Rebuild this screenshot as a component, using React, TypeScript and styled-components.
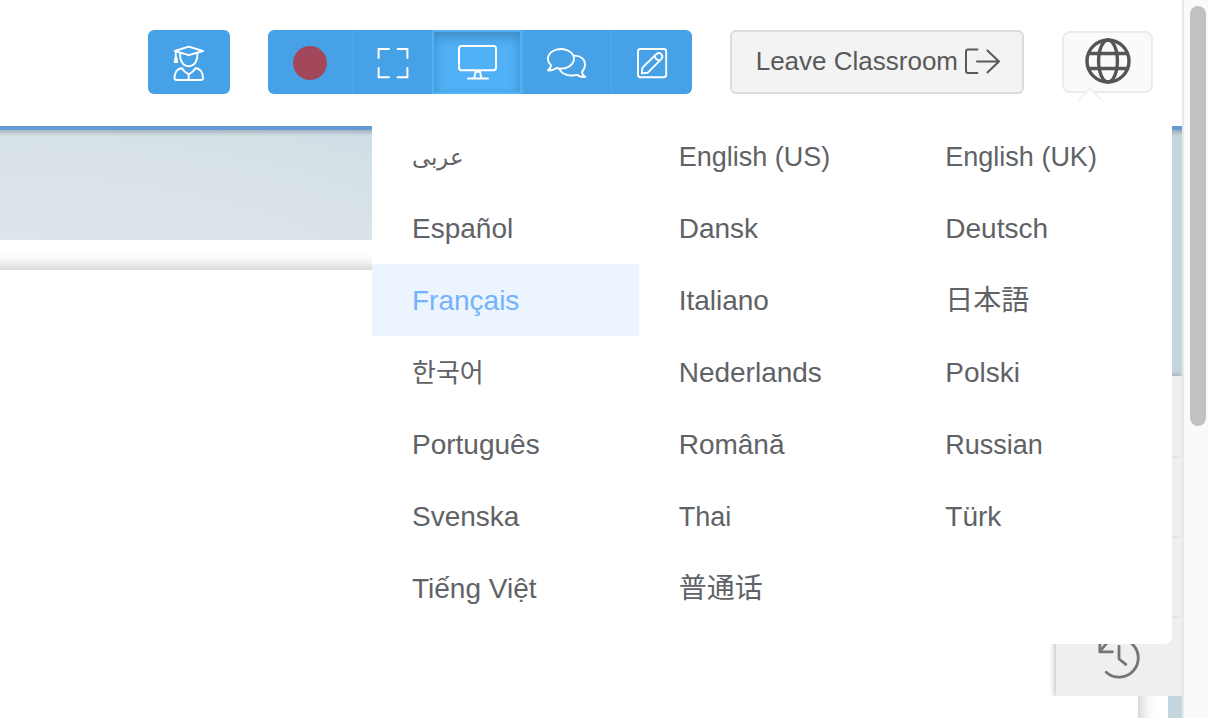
import React from "react";
import styled, { createGlobalStyle, css } from "styled-components";

const GlobalStyle = createGlobalStyle`
  *, *::before, *::after { box-sizing: border-box; }
  body {
    margin: 0;
    background: #fff;
    color: #606266;
    font-family: "Liberation Sans", "Noto Sans CJK SC", sans-serif;
  }
  button { font: inherit; color: inherit; cursor: pointer; }
`;

const Page = styled.div`
  display: grid;
  grid-template-columns: minmax(0, 1fr) 26px;
  min-height: 100vh;
`;

const Classroom = styled.div`
  display: flex;
  flex-direction: column;
`;

const Header = styled.header`
  position: relative;
  z-index: 2;
  display: flex;
  justify-content: flex-end;
  align-items: center;
  gap: 38px;
  padding: 30px 29px 32px 0;
  background: #fff;
  border-bottom: 4px solid #649ad6;
`;

const ToolButton = styled.button<{ $width: number; $active?: boolean; $divided?: boolean }>`
  display: flex;
  align-items: center;
  justify-content: center;
  width: ${(p) => p.$width}px;
  height: 64px;
  padding: 2px 0 0;
  border: 0 solid #4aa6ea;
  border-left-width: ${(p) => (p.$divided ? 2 : 0)}px;
  background: #46a1e6;
  color: #fff;
  ${(p) =>
    p.$active &&
    css`
      padding: 0;
      border: 2px solid #50b1f6;
      background: #50b1f6;
      box-shadow: inset 0 5px 12px rgba(0, 0, 0, 0.22);
    `}
`;

const StudentButton = styled(ToolButton)`
  border-radius: 6px;
`;

const ToolGroup = styled.div`
  display: flex;
  overflow: hidden;
  border-radius: 6px;
`;

const RecordDot = styled.span`
  width: 34px;
  height: 34px;
  border-radius: 50%;
  background: #a3485a;
`;

const LeaveButton = styled.button`
  display: flex;
  align-items: center;
  gap: 6px;
  height: 64px;
  padding: 0 20px 2px 24px;
  border: 2px solid #dcdcdc;
  border-radius: 6px;
  background: #f3f3f3;
  color: #595959;
  font-size: 26px;
  line-height: 30px;
`;

const LanguageButton = styled.button`
  display: flex;
  align-items: center;
  justify-content: center;
  width: 91px;
  height: 62px;
  padding: 0 0 2px;
  border: 2px solid #ebebed;
  border-radius: 8px;
  background: #fafafa;
  color: #555;
`;

const LanguageMenu = styled.nav`
  position: absolute;
  top: 100px;
  right: 10px;
  width: 800px;
  padding: 20px 0;
  border-radius: 8px;
  background: #fff;
`;

const Caret = styled.svg`
  position: absolute;
  top: -12px;
  right: 70px;
`;

const LanguageList = styled.ul`
  display: grid;
  grid-template-columns: repeat(3, 1fr);
  margin: 0;
  padding: 0;
  list-style: none;
`;

const LanguageOption = styled.button<{ $current?: boolean; $size?: number }>`
  display: block;
  width: 100%;
  height: 72px;
  padding: 2px 0 0 40px;
  border: 0;
  background: ${(p) => (p.$current ? "#ecf4ff" : "transparent")};
  color: ${(p) => (p.$current ? "#74b2fb" : "#606266")};
  font-size: ${(p) => p.$size ?? 28}px;
  line-height: 32px;
  text-align: left;
`;

const Stage = styled.main`
  position: relative;
  flex: 1;
  display: flex;
  overflow: hidden;
  padding: 110px 14px 0 0;
  background:
    linear-gradient(rgba(60, 80, 100, 0.3), rgba(60, 80, 100, 0) 6px),
    radial-gradient(1100px 420px at 0 200px, #dfe4ec 20%, #d7e2e7 45%, #cfdde5 60%, #c4d5de);
`;

const Panel = styled.section`
  flex: 1;
  display: flex;
  padding: 30px 30px 0 0;
  background: #fff;
`;

const Board = styled.div`
  flex: 1;
  margin: 0 0 -20px -20px;
  background: #fff;
  box-shadow: 0 0 16px rgba(0, 0, 0, 0.3);
`;

const SideTools = styled.aside`
  position: absolute;
  top: 246px;
  right: 0;
  width: 126px;
  background: #efefef;
  box-shadow: -1px 0 6px rgba(0, 0, 0, 0.3);
  clip-path: inset(-6px 0 0 -8px);
`;

const SideTool = styled.button`
  display: flex;
  align-items: center;
  justify-content: center;
  width: 100%;
  height: 80px;
  padding: 0;
  border: 0;
  border-top: 2px solid #e5e5e9;
  background: none;
  color: #757575;
  &:first-child { border-top: 0; }
`;

const ScrollTrack = styled.div`
  padding: 6px 2px 0 6px;
  border-left: 2px solid #e8e8e8;
  background: #fafafa;
`;

const ScrollThumb = styled.div`
  height: 420px;
  border-radius: 8px;
  background: #c1c1c1;
`;

type IconProps = { width: number; height: number; stroke?: number; children: React.ReactNode };

const Icon = ({ width, height, stroke = 2, children }: IconProps) => (
  <svg
    width={width}
    height={height}
    viewBox={`0 0 ${width} ${height}`}
    fill="none"
    stroke="currentColor"
    strokeWidth={stroke}
    strokeLinecap="round"
    strokeLinejoin="round"
    aria-hidden="true"
  >
    {children}
  </svg>
);

const StudentIcon = () => (
  <Icon width={32} height={36} stroke={1.9}>
    <path d="M15.7 1.6 30 6 15.7 10.2 1.8 6Z" />
    <path d="M7 8.5C6.6 15 9.5 21.2 15.7 21.2S24.8 15 24.4 8.5" />
    <path d="M2.8 7v6" />
    <path d="M2.6 12.5 1.7 17h2.5l-.8-4.5Z" fill="currentColor" />
    <path d="M3.6 35H27.8Q30 35 30 33C30 28 27.5 23.5 22.4 23.2 21 25.8 18.5 28 15.7 29.4 13 28 10.5 25.8 9 23.2 4 23.5 1.5 28 1.5 33Q1.5 35 3.6 35Z" />
    <path d="M15.7 29.4v5.6" />
  </Icon>
);

const FullscreenIcon = () => (
  <Icon width={32} height={32}>
    <path strokeLinejoin="miter" d="M1.6 11V2H12M20.6 2H30.4V11M30.4 21V30.3H20.6M12 30.3H1.6V21" />
  </Icon>
);

const MonitorIcon = () => (
  <Icon width={40} height={36}>
    <rect x="2" y="2" width="37" height="24.2" rx="2.4" />
    <path d="M18.7 27.4 17.2 34M22.9 27.4 24.4 34M18.7 27.8h4.2M11 34.6H31" />
  </Icon>
);

const ChatIcon = () => (
  <Icon width={42} height={34} stroke={1.9}>
    <path d="M5 19.1A13 9.8 0 1 1 10.5 22C8 23.8 5 24.8 2 24.4 4 23 5 21.5 5 19.1Z" />
    <path d="M28 9.6C35 9.8 39 13.5 39 18.5 39 21.5 37.8 24 36 25.8 36 28.5 37.5 30 39.3 31 36 31.4 33 30.5 31 28.8 23 31 15.5 28 13.5 23" />
  </Icon>
);

const EditIcon = () => (
  <Icon width={32} height={32} stroke={1.9}>
    <rect x="2" y="2" width="28.2" height="28.2" rx="2.4" />
    <path d="M5.8 26.4 6.4 20.8 20.6 6.9Q23 5 25.2 7.1 27.4 9.4 25.5 11.8L11.6 25.8Z" />
    <path d="M18.8 8.8Q19.5 12.8 23.6 13.5" />
  </Icon>
);

const LeaveIcon = () => (
  <Icon width={38} height={28}>
    <path d="M13.4 2.4H4Q2 2.4 2 4.4V24Q2 26 4 26H13.4M13 14.4H35M23.4 3.4 35 14.4 23.4 25.4" />
  </Icon>
);

const GlobeIcon = () => (
  <Icon width={46} height={46} stroke={3.4}>
    <circle cx="23" cy="23" r="21" />
    <ellipse cx="23" cy="23" rx="9.4" ry="21" />
    <path strokeLinecap="butt" d="M3 15.5H43M3 30.5H43" />
  </Icon>
);

const HistoryIcon = () => (
  <Icon width={44} height={44} stroke={2.8}>
    <path d="M9.2 37.2A19.2 19.2 0 1 0 9 8.9L2.9 16.6" />
    <path d="M2.9 3V16.8H15.4M22 11.5V24L28.8 29.4" />
  </Icon>
);

type Language = { label: string; lang: string; size?: number };

const languages: Language[] = [
  { label: "عربى", lang: "ar", size: 23 },
  { label: "English (US)", lang: "en-US", size: 27 },
  { label: "English (UK)", lang: "en-GB", size: 27 },
  { label: "Español", lang: "es" },
  { label: "Dansk", lang: "da" },
  { label: "Deutsch", lang: "de" },
  { label: "Français", lang: "fr" },
  { label: "Italiano", lang: "it" },
  { label: "日本語", lang: "ja" },
  { label: "한국어", lang: "ko", size: 26 },
  { label: "Nederlands", lang: "nl" },
  { label: "Polski", lang: "pl" },
  { label: "Português", lang: "pt" },
  { label: "Română", lang: "ro" },
  { label: "Russian", lang: "ru", size: 27 },
  { label: "Svenska", lang: "sv" },
  { label: "Thai", lang: "th", size: 27 },
  { label: "Türk", lang: "tr" },
  { label: "Tiếng Việt", lang: "vi" },
  { label: "普通话", lang: "zh" },
];

export default function App() {
  return (
    <Page>
      <GlobalStyle />
      <Classroom>
        <Header>
          <StudentButton $width={82} aria-label="Students">
            <StudentIcon />
          </StudentButton>
          <ToolGroup>
            <ToolButton $width={84} aria-label="Record">
              <RecordDot />
            </ToolButton>
            <ToolButton $width={80} $divided aria-label="Full screen">
              <FullscreenIcon />
            </ToolButton>
            <ToolButton $width={90} $active aria-label="Share screen" aria-pressed="true">
              <MonitorIcon />
            </ToolButton>
            <ToolButton $width={88} $divided aria-label="Chat">
              <ChatIcon />
            </ToolButton>
            <ToolButton $width={82} $divided aria-label="Whiteboard">
              <EditIcon />
            </ToolButton>
          </ToolGroup>
          <LeaveButton>
            Leave Classroom
            <LeaveIcon />
          </LeaveButton>
          <LanguageButton aria-label="Language" aria-expanded="true">
            <GlobeIcon />
          </LanguageButton>
          <LanguageMenu aria-label="Languages">
            <Caret width="24" height="12" viewBox="0 0 24 12" aria-hidden="true">
              <path d="M0 12 12 0 24 12Z" fill="#fff" />
              <path d="M0.5 12 12 0.7 23.5 12" fill="none" stroke="#ebeef5" strokeWidth="1.5" />
            </Caret>
            <LanguageList>
              {languages.map(({ label, lang, size }) => (
                <li key={lang}>
                  <LanguageOption lang={lang} $size={size} $current={lang === "fr"}>
                    {label}
                  </LanguageOption>
                </li>
              ))}
            </LanguageList>
          </LanguageMenu>
        </Header>
        <Stage>
          <Panel>
            <Board />
          </Panel>
          <SideTools>
            <SideTool aria-label="Select" />
            <SideTool aria-label="Draw" />
            <SideTool aria-label="Text" />
            <SideTool aria-label="History">
              <HistoryIcon />
            </SideTool>
          </SideTools>
        </Stage>
      </Classroom>
      <ScrollTrack aria-hidden="true">
        <ScrollThumb />
      </ScrollTrack>
    </Page>
  );
}
